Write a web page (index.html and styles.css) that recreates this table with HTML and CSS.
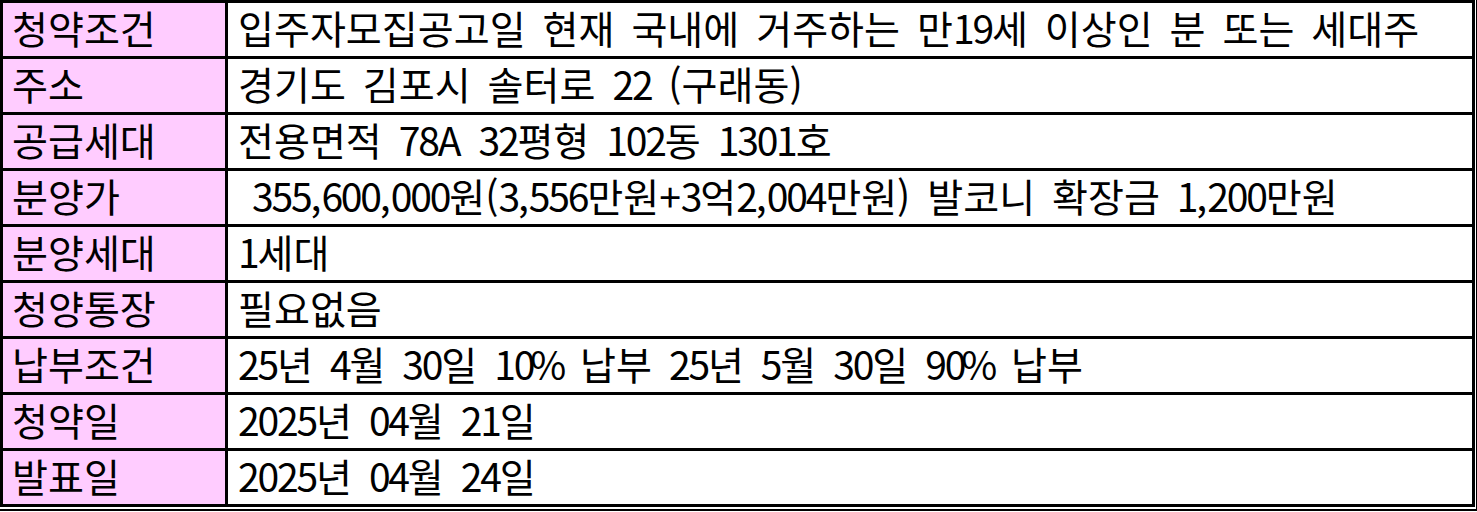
FILE: index.html
```html
<!DOCTYPE html>
<html lang="ko">
<head>
<meta charset="utf-8">
<link rel="stylesheet" href="styles.css">
</head>
<body>
<div class="frame">
  <div class="grid">
    <div class="label">청약조건</div><div class="value">입주자모집공고일 현재 국내에 거주하는 만<span class="n">19</span>세 이상인 분 또는 세대주</div>
    <div class="label">주소</div><div class="value">경기도 김포시 솔터로 <span class="n">22</span> (구래동)</div>
    <div class="label">공급세대</div><div class="value">전용면적 <span class="n">78</span>A <span class="n">32</span>평형 <span class="n">102</span>동 <span class="n">1301</span>호</div>
    <div class="label">분양가</div><div class="value indent"><span class="n">355</span>,<span class="n">600</span>,<span class="n">000</span>원(<span class="n">3</span>,<span class="n">556</span>만원+<span class="n">3</span>억<span class="n">2</span>,<span class="n">004</span>만원) 발코니 확장금 <span class="n">1</span>,<span class="n">200</span>만원</div>
    <div class="label">분양세대</div><div class="value"><span class="n">1</span>세대</div>
    <div class="label">청양통장</div><div class="value">필요없음</div>
    <div class="label">납부조건</div><div class="value"><span class="n">25</span>년 <span class="n">4</span>월 <span class="n">30</span>일 <span class="n">10</span><span class="pc">%</span> 납부 <span class="n">25</span>년 <span class="n">5</span>월 <span class="n">30</span>일 <span class="n">90</span><span class="pc">%</span> 납부</div>
    <div class="label">청약일</div><div class="value"><span class="n">2025</span>년 <span class="n">04</span>월 <span class="n">21</span>일</div>
    <div class="label">발표일</div><div class="value"><span class="n">2025</span>년 <span class="n">04</span>월 <span class="n">24</span>일</div>
  </div>
</div>
</body>
</html>
```
FILE: styles.css
```css
html, body {
  margin: 0;
  padding: 0;
  background: #fff;
}
.frame {
  width: 1477px;
  box-sizing: border-box;
  padding: 0 1px 2px 0;
  border-right: 1px solid #000;
  border-bottom: 2px solid #000;
}
.grid {
  display: grid;
  grid-template-columns: 225px 1247px;
  grid-auto-rows: 56px;
  border-top: 3px solid #000;
  border-left: 3px solid #000;
  font-family: "Noto Sans CJK KR", "Noto Sans", sans-serif;
  font-size: 39.1px;
  color: #000;
}
.label, .value {
  border-right: 3px solid #000;
  border-bottom: 3px solid #000;
  display: flex;
  align-items: center;
  white-space: pre;
  line-height: 1;
  padding-bottom: 4px;
  word-spacing: 6px;
}
.label {
  background: #ffccff;
  padding-left: 9px;
}
.value {
  background: #fff;
  padding-left: 10px;
}
.value.indent {
  padding-left: 24px;
}
.n {
  letter-spacing: -2.2px;
}
.pc {
  margin-left: -3px;
  letter-spacing: -3px;
}
```
